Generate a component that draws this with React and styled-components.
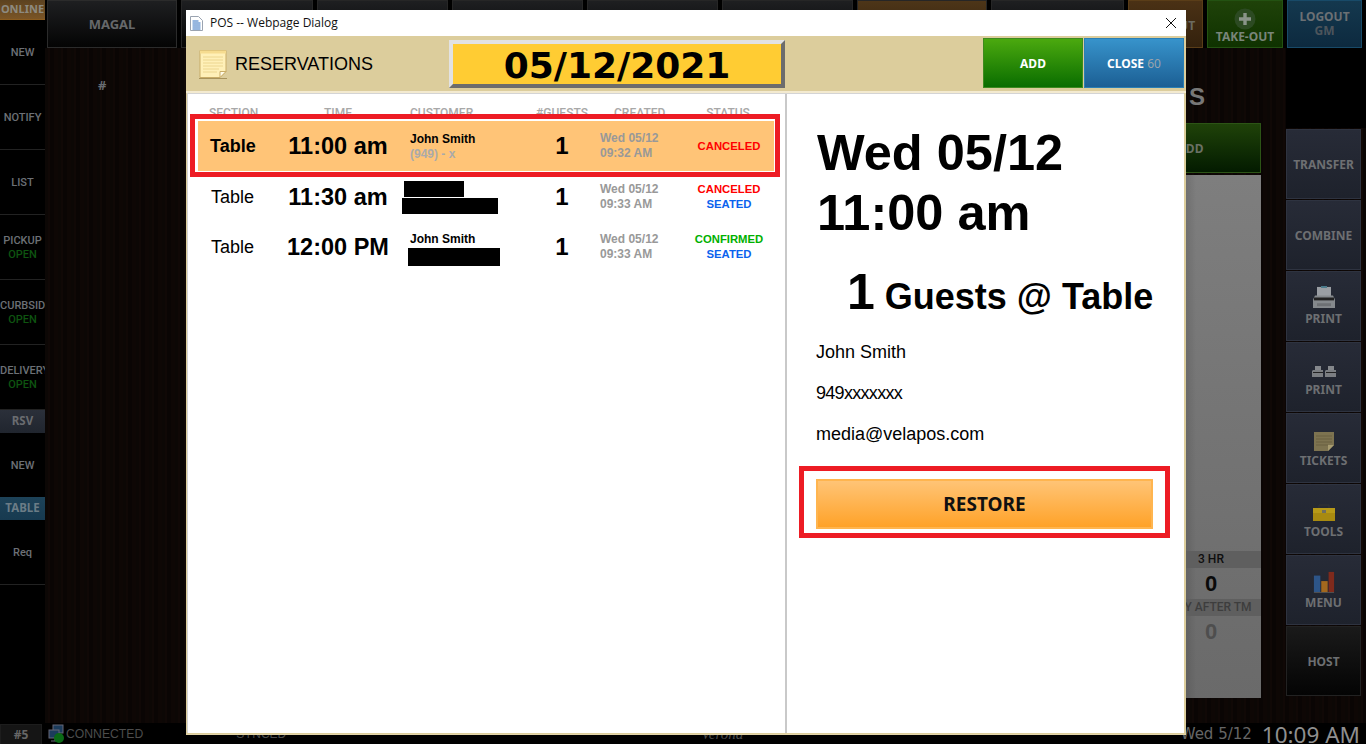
import React from "react";
import styled, { createGlobalStyle } from "styled-components";

const GlobalStyle = createGlobalStyle`
  html, body {
    margin: 0;
    padding: 0;
    background: #000;
    overflow: hidden;
  }
  * {
    box-sizing: border-box;
  }
`;

const ARIAL = `"Liberation Sans", Arial, sans-serif`;
const TAHOMA = `"Noto Sans", Tahoma, sans-serif`;
const VERDANA = `"DejaVu Sans", Verdana, sans-serif`;

const sideItems = [
  { label: "NEW" },
  { label: "NOTIFY" },
  { label: "LIST" },
  { label: "PICKUP", sub: "OPEN" },
  { label: "CURBSIDE", sub: "OPEN" },
  { label: "DELIVERY", sub: "OPEN" },
];

const topTabs = [
  { width: 132 },
  { width: 131 },
  { width: 131 },
  { width: 131 },
  { width: 131 },
  { width: 130, tone: "amber" },
  { width: 133 },
];

const reservations = [
  {
    section: "Table",
    time: "11:00 am",
    name: "John Smith",
    phone: "(949) - x",
    guests: 1,
    created: ["Wed 05/12", "09:32 AM"],
    status: [{ text: "CANCELED", color: "#ff0000" }],
    selected: true,
  },
  {
    section: "Table",
    time: "11:30 am",
    redactedName: true,
    redactedPhone: { width: 96, left: -8 },
    guests: 1,
    created: ["Wed 05/12", "09:33 AM"],
    status: [
      { text: "CANCELED", color: "#ff0000" },
      { text: "SEATED", color: "#0a62ee" },
    ],
  },
  {
    section: "Table",
    time: "12:00 PM",
    name: "John Smith",
    redactedPhone: { width: 92, left: -2 },
    guests: 1,
    created: ["Wed 05/12", "09:33 AM"],
    status: [
      { text: "CONFIRMED", color: "#00b000" },
      { text: "SEATED", color: "#0a62ee" },
    ],
  },
];

const toolButtons = [
  { label: "TRANSFER" },
  { label: "COMBINE" },
  { label: "PRINT", icon: <PrinterIcon /> },
  { label: "PRINT", icon: <TwoPrintersIcon /> },
  { label: "TICKETS", icon: <TicketIcon /> },
  { label: "TOOLS", icon: <ToolboxIcon /> },
  { label: "MENU", icon: <BarsIcon /> },
];

function PrinterIcon() {
  return (
    <svg width="24" height="23" viewBox="0 0 24 24" preserveAspectRatio="none">
      <rect x="5" y="1" width="14" height="10" fill="#9a9ea3" />
      <rect x="9" y="0" width="6" height="2" fill="#4a7a8a" />
      <path d="M3 10h18l2 4v9H1v-9z" fill="#85898d" />
      <rect x="2" y="12" width="20" height="3" fill="#222" />
      <rect x="5" y="18" width="14" height="3" fill="#6d7074" />
    </svg>
  );
}

function TwoPrintersIcon() {
  const one = (
    <>
      <rect x="3" y="0" width="6" height="4" fill="#85888c" />
      <path d="M1 4h10v7H0V5z" fill="#7b7e82" />
      <rect x="1" y="6" width="10" height="1" fill="#222" />
    </>
  );
  return (
    <svg width="24" height="22" viewBox="0 0 24 22">
      <g transform="translate(0 8)">{one}</g>
      <g transform="translate(13 8)">{one}</g>
    </svg>
  );
}

function TicketIcon() {
  return (
    <svg width="20" height="22" viewBox="0 0 20 22">
      <g transform="translate(0 3)">
        <path d="M0 0h20v13l-6 6H0z" fill="#7d7350" />
        <path d="M2 4h16M2 7h16M2 10h16M2 13h12" stroke="#6a6141" />
        <path d="M14 19v-6h6z" fill="#a89c70" />
      </g>
    </svg>
  );
}

function ToolboxIcon() {
  return (
    <svg width="24" height="22" viewBox="0 0 24 22">
      <g transform="translate(0 4)">
        <path d="M7 4V1h10v3" fill="none" stroke="#333" />
        <path d="M1 4h22v13H1z" fill="#a88a10" />
        <path d="M1 4h22v5H1z" fill="#b79a18" />
        <rect x="10" y="6" width="4" height="3" fill="#6f6f60" />
      </g>
    </svg>
  );
}

function BarsIcon() {
  return (
    <svg width="22" height="22" viewBox="0 0 24 24">
      <rect x="1" y="5" width="7" height="18" fill="#2d5588" />
      <rect x="9" y="11" width="7" height="12" fill="#a3681e" />
      <rect x="17" y="1" width="6" height="22" fill="#7f2a1c" />
      <path d="M1 23.5h22" stroke="#555" />
    </svg>
  );
}

function PlusBall() {
  return (
    <svg width="22" height="22" viewBox="0 0 22 22">
      <circle cx="11" cy="11" r="10.5" fill="#2c4a22" />
      <path d="M11 5v12M5 11h12" stroke="#8a948a" strokeWidth="3.4" />
    </svg>
  );
}

function NetworkIcon() {
  return (
    <svg width="18" height="21" viewBox="0 0 18 21">
      <rect x="5" y="1" width="10" height="8" fill="#1c3c5c" stroke="#667" />
      <rect x="1" y="6" width="10" height="8" fill="#1c3c5c" stroke="#667" />
      <path d="M3 17h8M7 14v3" stroke="#667" />
      <circle cx="11" cy="14" r="5" fill="#0b6a16" />
    </svg>
  );
}

function DocIcon() {
  return (
    <svg width="13" height="15" viewBox="0 0 13 15">
      <path d="M.5.5h8l4 4v10H.5z" fill="#fff" stroke="#9aa3b0" />
      <path d="M2.5 5h6M2.5 7h8M2.5 9h8M2.5 11h8M2.5 13h8" stroke="#2e6fc0" />
    </svg>
  );
}

function NoteIcon() {
  return (
    <svg width="29" height="29" viewBox="0 0 29 29">
      <path d="M1 .5h26v21l-6 6H1z" fill="#fff0b8" stroke="#c9ad68" />
      <path d="M1 .5h26v3H1z" fill="#f6dc90" />
      <path d="M4 7h20M4 10h20M4 13h20M4 16h20M4 19h16M4 22h14" stroke="#ecd690" />
      <path d="M21 27.5v-6h6z" fill="#fffbe8" stroke="#c9ad68" />
      <path d="M0 28.5h28" stroke="#a8935c" />
    </svg>
  );
}

function ReservationRow({ row }) {
  const content = (
    <Row $selected={row.selected}>
      <SectionCell $selected={row.selected}>{row.section}</SectionCell>
      <TimeCell>{row.time}</TimeCell>
      <CustomerCell $nudge={row.redactedName ? 0 : row.phone ? 2 : 3}>
        {row.redactedName ? <Redacted $width={60} $height={16} $left={-6} /> : <Name>{row.name}</Name>}
        {row.phone && <Phone>{row.phone}</Phone>}
        {row.redactedPhone && (
          <Redacted
            $width={row.redactedPhone.width}
            $height={row.redactedName ? 16 : 18}
            $left={row.redactedPhone.left}
          />
        )}
      </CustomerCell>
      <GuestCell>{row.guests}</GuestCell>
      <CreatedCell>
        {row.created.map((line) => (
          <div key={line}>{line}</div>
        ))}
      </CreatedCell>
      <StatusCell>
        {row.status.map((s) => (
          <StatusText key={s.text} $color={s.color}>
            {s.text}
          </StatusText>
        ))}
      </StatusCell>
    </Row>
  );
  if (row.selected) return <SelectedFrame>{content}</SelectedFrame>;
  return <PlainRow>{content}</PlainRow>;
}

export default function App() {
  return (
    <Screen>
      <GlobalStyle />
      <Main>
        <Sidebar>
          <OnlineTag>ONLINE</OnlineTag>
          {sideItems.map(({ label, sub }) => (
            <SideItem key={label}>
              <span>{label}</span>
              {sub && <SideSub>{sub}</SideSub>}
            </SideItem>
          ))}
          <SideTag>RSV</SideTag>
          <SideItem $short>
            <span>NEW</span>
          </SideItem>
          <SideTag $blue>TABLE</SideTag>
          <SideItem>
            <span>Req</span>
          </SideItem>
        </Sidebar>

        <Center>
          <TopBar>
            <MagalButton>MAGAL</MagalButton>
            {topTabs.map((tab, i) => (
              <TopTab key={i} $width={tab.width} $tone={tab.tone} />
            ))}
            <ActionButton $tone="amber" $width={75}>
              <ActionLabel>DINE-OUT</ActionLabel>
            </ActionButton>
            <ActionButton $tone="green" $width={76}>
              <PlusBall />
              <ActionLabel>TAKE-OUT</ActionLabel>
            </ActionButton>
            <ActionButton $tone="blue" $width={75}>
              <ActionLabel>LOGOUT</ActionLabel>
              <ActionSub>GM</ActionSub>
            </ActionButton>
          </TopBar>

          <Floor>
            <Wood>
              <Hash>#</Hash>
              <OrderPanel>
                <OrderTitle>S</OrderTitle>
                <OrderAdd>ADD</OrderAdd>
                <OrderBody>
                  <Stats>
                    <StatHead>3 HR</StatHead>
                    <StatValue>0</StatValue>
                    <StatHead $dim>PAY AFTER TM</StatHead>
                    <StatValue $dim>0</StatValue>
                  </Stats>
                </OrderBody>
              </OrderPanel>
            </Wood>
            <ToolColumn>
              <ToolCap />
              {toolButtons.map(({ label, icon }, i) => (
                <ToolButton key={i}>
                  {icon}
                  <span>{label}</span>
                </ToolButton>
              ))}
              <ToolButton $dark>
                <span>HOST</span>
              </ToolButton>
            </ToolColumn>
          </Floor>
        </Center>
      </Main>

      <StatusBar>
        <SeatTag>#5</SeatTag>
        <StatusIcon>
          <NetworkIcon />
        </StatusIcon>
        <StatusLabel>CONNECTED</StatusLabel>
        <SyncLabel>SYNCED</SyncLabel>
        <Brand>Verona</Brand>
        <DateLabel>Wed 5/12</DateLabel>
        <ClockLabel>10:09 AM</ClockLabel>
      </StatusBar>

      <Dialog>
        <TitleBar>
          <DocIcon />
          <TitleText>POS -- Webpage Dialog</TitleText>
          <CloseGlyph width="12" height="12" viewBox="0 0 12 12">
            <path d="M1 1l10 10M11 1L1 11" stroke="#111" strokeWidth="1" fill="none" />
          </CloseGlyph>
        </TitleBar>

        <Header>
          <HeaderTitle>
            <NoteIcon />
            <span>RESERVATIONS</span>
          </HeaderTitle>
          <DateBox>05/12/2021</DateBox>
          <HeaderActions>
            <DialogButton $tone="green">ADD</DialogButton>
            <DialogButton $tone="blue">
              CLOSE <Countdown>60</Countdown>
            </DialogButton>
          </HeaderActions>
        </Header>

        <Panels>
          <ListPane>
            <ColumnHeads>
              <span>SECTION</span>
              <span>TIME</span>
              <span>CUSTOMER</span>
              <span>#GUESTS</span>
              <span>CREATED</span>
              <span>STATUS</span>
            </ColumnHeads>
            {reservations.map((row) => (
              <ReservationRow key={row.time} row={row} />
            ))}
          </ListPane>

          <DetailPane>
            <DetailWhen>
              Wed 05/12
              <br />
              11:00 am
            </DetailWhen>
            <DetailGuests>
              <GuestCount>1</GuestCount> Guests @ Table
            </DetailGuests>
            <DetailLine>John Smith</DetailLine>
            <DetailLine $tight>949xxxxxxx</DetailLine>
            <DetailLine>media@velapos.com</DetailLine>
            <RestoreFrame>
              <RestoreButton>RESTORE</RestoreButton>
            </RestoreFrame>
          </DetailPane>
        </Panels>
      </Dialog>
    </Screen>
  );
}

const Screen = styled.div`
  position: relative;
  width: 1366px;
  height: 744px;
  overflow: hidden;
  display: flex;
  flex-direction: column;
  background: #000;
  font-family: ${TAHOMA};
`;

const Main = styled.div`
  flex: 0 0 723px;
  display: flex;
  min-height: 0;
`;

const Sidebar = styled.aside`
  flex: 0 0 45px;
  width: 45px;
  background: #000;
  overflow: hidden;
  display: flex;
  flex-direction: column;
`;

const OnlineTag = styled.div`
  height: 20px;
  background: linear-gradient(#5c4220, #7a5526);
  color: #8d8a80;
  font: 700 11px/18px ${TAHOMA};
  text-align: center;
  border-bottom: 1px solid #8a5c20;
  white-space: nowrap;
`;

const SideItem = styled.div`
  height: ${(p) => (p.$short ? 64 : 65)}px;
  flex: none;
  padding-top: 2px;
  border-bottom: ${(p) => (p.$short ? "none" : "1px solid #222")};
  display: flex;
  flex-direction: column;
  justify-content: center;
  color: #6c7076;
  font: 500 11px/14px Roboto, sans-serif;
  text-align: center;
  white-space: nowrap;
  overflow: hidden;
  span {
    display: block;
  }
`;

const SideSub = styled.span`
  color: #0e5410;
`;

const SideTag = styled.div`
  height: 23px;
  flex: none;
  background: ${(p) => (p.$blue ? "linear-gradient(#1d4258, #173a50)" : "linear-gradient(#2b303a, #20252e)")};
  color: ${(p) => (p.$blue ? "#6b7c86" : "#6a6c70")};
  font: 700 11.5px/22px ${TAHOMA};
  text-align: center;
`;

const Center = styled.div`
  flex: 1;
  min-width: 0;
  display: flex;
  flex-direction: column;
  background: repeating-linear-gradient(90deg, #0c0705 0 3px, #100806 3px 5px, #0a0504 5px 9px, #0e0705 9px 13px);
`;

const TopBar = styled.div`
  flex: 0 0 48px;
  display: flex;
  gap: 4px;
  padding-left: 2px;
  background: #000;
`;

const MagalButton = styled.div`
  flex: 0 0 130px;
  background: linear-gradient(#1e1f21, #040404);
  border: 1px solid #2b2b2b;
  color: #66686a;
  font: 700 13px/46px ${TAHOMA};
  text-align: center;
`;

const TopTab = styled.div`
  flex: 0 0 ${(p) => p.$width}px;
  background: ${(p) => (p.$tone === "amber" ? "linear-gradient(#4d3518, #2e1f0c)" : "linear-gradient(#1e1f21, #040404)")};
  border: 1px solid #262626;
`;

const tones = {
  amber: ["#4a3115", "#33210d", "#5a3d18", "#6b6a60"],
  green: ["#1f4209", "#0f3200", "#235212", "#79857a"],
  blue: ["#14384e", "#0d2a3f", "#184a68", "#6b7074"],
};

const ActionButton = styled.div`
  flex: 0 0 ${(p) => p.$width}px;
  background: linear-gradient(${(p) => tones[p.$tone][0]}, ${(p) => tones[p.$tone][1]});
  border: 1px solid ${(p) => tones[p.$tone][2]};
  color: ${(p) => tones[p.$tone][3]};
  display: flex;
  flex-direction: column;
  align-items: center;
  justify-content: center;
  padding-top: ${(p) => (p.$tone === "blue" ? 0 : 4)}px;
`;

const ActionLabel = styled.span`
  font: 700 12px/14px ${TAHOMA};
  white-space: nowrap;
`;

const ActionSub = styled.span`
  font: 700 12px/14px ${TAHOMA};
  color: #4d555c;
`;

const Floor = styled.div`
  flex: 1;
  min-height: 0;
  display: flex;
`;

const Wood = styled.div`
  flex: 1;
  min-width: 0;
  display: flex;
  justify-content: space-between;
  padding-right: 25px;
`;

const Hash = styled.div`
  margin: 30px 0 0 53px;
  color: #676b70;
  font: 700 13px/15px ${TAHOMA};
`;

const OrderPanel = styled.div`
  width: 141px;
  display: flex;
  flex-direction: column;
  padding-bottom: 25px;
`;

const OrderTitle = styled.div`
  height: 75px;
  padding: 34px 56px 0 0;
  text-align: right;
  color: #777;
  font: 700 24px/30px ${ARIAL};
`;

const OrderAdd = styled.div`
  height: 50px;
  flex: none;
  background: linear-gradient(#1f4209, #031b00);
  border: 1px solid #2c5416;
  color: #6a7064;
  font: 700 12px/50px ${TAHOMA};
  text-align: center;
`;

const OrderBody = styled.div`
  flex: 1;
  margin-top: 2px;
  display: flex;
  justify-content: flex-end;
  align-items: flex-end;
  padding-bottom: 51px;
  background: linear-gradient(90deg, rgba(0, 0, 0, 0.12) 46%, transparent 54%), linear-gradient(#7e7e7e, #6a6a6a);
`;

const Stats = styled.div`
  width: 100px;
  text-align: center;
`;

const StatHead = styled.div`
  height: 17px;
  background: #5f5f5f;
  color: ${(p) => (p.$dim ? "#3d3d3d" : "#0e0e0e")};
  font: 500 12px/17px Roboto, sans-serif;
  white-space: nowrap;
`;

const StatValue = styled.div`
  height: 31px;
  color: ${(p) => (p.$dim ? "#4e4e4e" : "#0a0a0a")};
  font: 700 22px/32px ${ARIAL};
`;

const ToolColumn = styled.div`
  flex: 0 0 80px;
  display: flex;
  flex-direction: column;
  gap: 1px;
  padding-right: 5px;
`;

const ToolCap = styled.div`
  height: 80px;
  margin: 0 -5px 0 0;
  background: #000;
`;

const ToolButton = styled.div`
  height: 70px;
  flex: none;
  display: flex;
  flex-direction: column;
  align-items: center;
  justify-content: center;
  gap: 2px;
  background: ${(p) => (p.$dark ? "linear-gradient(#1a1a1a, #040404)" : "linear-gradient(#272b37, #1e222c)")};
  border: 1px solid ${(p) => (p.$dark ? "#222" : "#2e3340")};
  color: #6d6f72;
  font: 700 12px/15px ${TAHOMA};
  span {
    display: block;
  }
`;

const StatusBar = styled.div`
  flex: 0 0 21px;
  display: flex;
  align-items: center;
  background: #000;
  color: #555;
`;

const SeatTag = styled.div`
  width: 42px;
  height: 21px;
  background: #151515;
  border: 1px solid #1d1d1d;
  color: #666;
  font: 700 12px/20px ${TAHOMA};
  text-align: center;
`;

const StatusIcon = styled.div`
  margin-left: 6px;
  height: 21px;
`;

const StatusLabel = styled.span`
  padding-top: 1px;
  color: #4c4c4c;
  font: 400 12.2px/21px ${ARIAL};
`;

const SyncLabel = styled.span`
  margin-left: 93px;
  color: #4c4c4c;
  font: 400 12px/21px ${ARIAL};
`;

const Brand = styled.span`
  margin-left: 415px;
  color: #4c4c4c;
  font: italic 400 15px/21px "Liberation Serif", serif;
`;

const DateLabel = styled.span`
  margin-left: auto;
  padding-top: 1px;
  color: #666;
  font: 400 15px/21px ${VERDANA};
  white-space: nowrap;
`;

const ClockLabel = styled.span`
  margin: 0 6px 0 10px;
  padding-top: 1px;
  color: #8f8f8f;
  font: 400 22.5px/21px ${TAHOMA};
  white-space: nowrap;
`;

const Dialog = styled.div`
  position: absolute;
  left: 186px;
  top: 10px;
  width: 1000px;
  height: 725px;
  display: flex;
  flex-direction: column;
  background: #dccd9c;
  border-bottom: 1px solid #e3d5a8;
`;

const TitleBar = styled.div`
  flex: 0 0 26px;
  display: flex;
  align-items: center;
  gap: 7px;
  padding: 0 9px 0 4px;
  background: #fff;
`;

const TitleText = styled.span`
  flex: 1;
  color: #111;
  font: 400 12px/26px "Open Sans", sans-serif;
`;

const CloseGlyph = styled.svg`
  display: block;
`;

const Header = styled.div`
  flex: 0 0 57px;
  display: flex;
  align-items: flex-start;
  padding-left: 13px;
  border-bottom: 2px solid #f3ead0;
`;

const HeaderTitle = styled.div`
  width: 250px;
  height: 55px;
  display: flex;
  align-items: center;
  gap: 7px;
  color: #000;
  font: 400 18px/20px ${ARIAL};
  svg {
    display: block;
    margin-top: 1px;
  }
`;

const DateBox = styled.div`
  width: 336px;
  height: 48px;
  margin-top: 4px;
  background: #ffcc33;
  border-style: solid;
  border-width: 4px;
  border-color: #e2e2e2 #6c6c6c #6c6c6c #e2e2e2;
  color: #000;
  font: 700 36px/44px ${VERDANA};
  text-align: center;
`;

const HeaderActions = styled.div`
  margin-left: auto;
  margin-right: 2px;
  padding-top: 2px;
  display: flex;
  gap: 1px;
`;

const DialogButton = styled.div`
  width: 100px;
  height: 50px;
  background: ${(p) => (p.$tone === "green" ? "linear-gradient(#4ba90f, #0a6d00)" : "linear-gradient(#3793cb, #1c5f94)")};
  border: 1px solid ${(p) => (p.$tone === "green" ? "#3e8a1f" : "#2a7fb5")};
  color: #fff;
  font: 700 12px/50px ${TAHOMA};
  text-align: center;
`;

const Countdown = styled.span`
  color: #9aa4ac;
  font-weight: 400;
`;

const Panels = styled.div`
  flex: 1;
  min-height: 0;
  display: flex;
  margin: 0 2px 1px 1px;
  background: #fff;
  border: 1px solid #d4d4d4;
  border-width: 1px 0 0 1px;
`;

const ListPane = styled.div`
  flex: 0 0 599px;
  border-right: 2px solid #c9c9c9;
  padding-top: 12px;
`;

const rowColumns = `82px 116px 144px 44px 96px 96px`;

const ColumnHeads = styled.div`
  display: grid;
  grid-template-columns: ${rowColumns};
  height: 8px;
  margin-left: 10px;
  color: #a8a8a8;
  font: 500 12px/14px Roboto, sans-serif;
  white-space: nowrap;
  span {
    justify-self: center;
  }
  span:nth-child(1) {
    justify-self: start;
    padding-left: 11px;
  }
  span:nth-child(3) {
    justify-self: start;
    padding-left: 14px;
  }
  span:nth-child(5) {
    justify-self: start;
    padding-left: 30px;
  }
`;

const SelectedFrame = styled.div`
  position: relative;
  z-index: 1;
  width: 590px;
  margin: 0 0 -5px 2px;
  background: #fff;
  border: 5px solid #ed1c24;
  padding: 2px 1px 1px 3px;
`;

const PlainRow = styled.div`
  margin-left: 10px;
`;

const Row = styled.div`
  display: grid;
  grid-template-columns: ${rowColumns};
  width: 576px;
  height: 50px;
  align-items: center;
  background: ${(p) => (p.$selected ? "#ffc477" : "transparent")};
  color: #000;
  font-family: ${ARIAL};
`;

const SectionCell = styled.div`
  padding-left: ${(p) => (p.$selected ? 12 : 13)}px;
  font-size: 18px;
  font-weight: ${(p) => (p.$selected ? 700 : 400)};
`;

const TimeCell = styled.div`
  font-size: 23.5px;
  font-weight: 700;
  text-align: center;
  white-space: nowrap;
`;

const CustomerCell = styled.div`
  padding: ${(p) => p.$nudge}px 0 0 14px;
  font-size: 12px;
  line-height: 15px;
  font-weight: 700;
`;

const Name = styled.div`
  height: 15px;
`;

const Phone = styled.div`
  color: #aaa;
`;

const Redacted = styled.div`
  width: ${(p) => p.$width}px;
  height: ${(p) => p.$height}px;
  margin-left: ${(p) => p.$left}px;
  margin-top: 1px;
  background: #000;
`;

const GuestCell = styled.div`
  text-align: center;
  font-size: 24px;
  font-weight: 700;
`;

const CreatedCell = styled.div`
  padding-left: 16px;
  color: #999;
  font-size: 12px;
  line-height: 15px;
  font-weight: 700;
  white-space: nowrap;
`;

const StatusCell = styled.div`
  padding-left: 2px;
  font-size: 12px;
  line-height: 15px;
  font-weight: 700;
  text-align: center;
`;

const StatusText = styled.div`
  color: ${(p) => p.$color};
  font-size: 11.3px;
  white-space: nowrap;
`;

const DetailPane = styled.div`
  flex: 1;
  min-width: 0;
  padding-top: 29px;
  color: #000;
  font-family: ${ARIAL};
`;

const DetailWhen = styled.div`
  padding-left: 30px;
  font-size: 50.5px;
  line-height: 60px;
  font-weight: 700;
`;

const DetailGuests = styled.div`
  margin-top: 19px;
  height: 60px;
  padding-left: 60px;
  font-size: 36px;
  line-height: 60px;
  font-weight: 700;
  white-space: nowrap;
`;

const GuestCount = styled.span`
  font-size: 50px;
`;

const DetailLine = styled.div`
  height: 41px;
  padding-left: 29px;
  font-size: 18px;
  line-height: 41px;
  letter-spacing: ${(p) => (p.$tight ? "-0.7px" : "0")};
  &:nth-of-type(3) {
    margin-top: 10px;
  }
`;

const RestoreFrame = styled.div`
  width: 371px;
  margin: 11px 0 0 12px;
  padding: 8px 12px 4px;
  border: 5px solid #ed1c24;
`;

const RestoreButton = styled.div`
  height: 50px;
  background: linear-gradient(#ffc476, #ffa228);
  border: 2px solid #ffb54f;
  color: #111;
  font: 700 19px/46px ${TAHOMA};
  text-align: center;
`;
